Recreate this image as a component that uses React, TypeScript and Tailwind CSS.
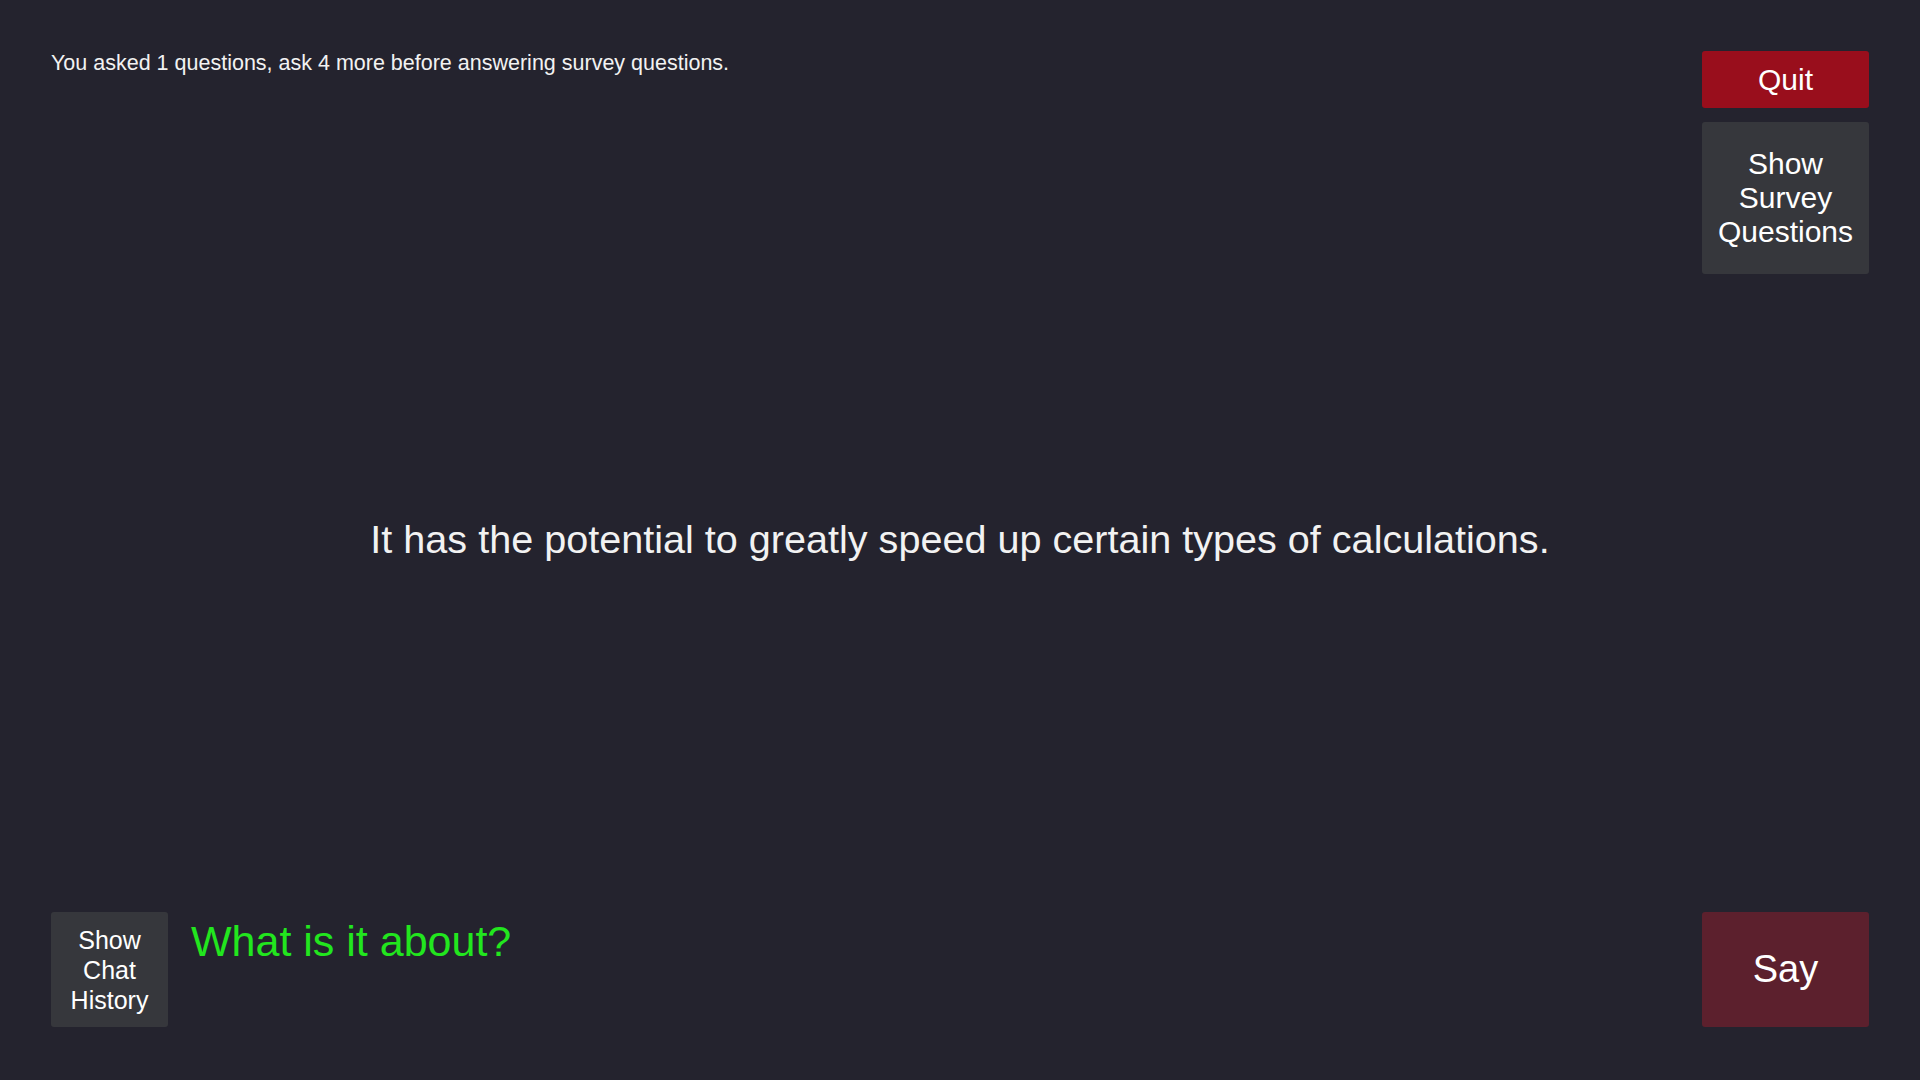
import React from 'react';

const App: React.FC = () => {
    const asked = 1;
    const needed = 5;

    return (
        <div
            className="grid w-full h-[1080px] bg-[#24232e] text-[#f2f2f2] overflow-hidden"
            style={{ fontFamily: '"Liberation Sans", Arial, sans-serif' }}
        >
            {/* Last answer, centred on the whole screen */}
            <div className="col-start-1 row-start-1 flex items-center justify-center">
                <p className="text-[39.6px]">It has the potential to greatly speed up certain types of calculations.</p>
            </div>

            {/* Controls */}
            <div className="col-start-1 row-start-1 flex flex-col justify-between px-[51px] pt-[51px] pb-[53px]">
                <div className="flex items-start justify-between">
                    <p className="text-[21.5px] -mt-[4px]">
                        You asked {asked} questions, ask {needed - asked} more before answering survey questions.
                    </p>
                    <div className="flex flex-col gap-[14px] w-[167px]">
                        <button className="h-[57px] rounded-[3px] bg-[#990e1c] text-[30px] text-white">Quit</button>
                        <button className="h-[152px] rounded-[3px] bg-[#36373c] px-2 text-[30px] leading-[34px] text-white">
                            Show Survey Questions
                        </button>
                    </div>
                </div>

                <div className="flex items-start">
                    <button className="w-[117px] h-[115px] rounded-[3px] bg-[#36373c] px-1 text-[25px] leading-[30px] text-white">
                        Show Chat History
                    </button>
                    <p className="ml-[23px] -mt-[3px] text-[43px] text-[#22e61e]">What is it about?</p>
                    <div className="flex-1" />
                    <button className="w-[167px] h-[115px] rounded-[3px] bg-[#5c202d] text-[38px] text-white">Say</button>
                </div>
            </div>
        </div>
    );
};

export default App;
